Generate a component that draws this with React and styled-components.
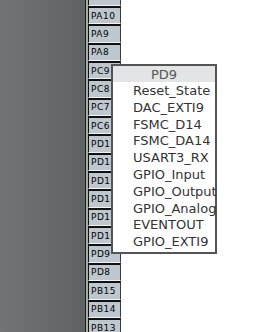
import React from "react";
import styled, { createGlobalStyle } from "styled-components";

const Global = createGlobalStyle`
  html, body {
    margin: 0;
    padding: 0;
    background: #fff;
    overflow: hidden;
  }
`;

const Page = styled.div`
  position: relative;
  display: flex;
  flex-direction: row;
  width: 271px;
  height: 332px;
  overflow: hidden;
  background: #fff;
`;

const Chip = styled.div`
  width: 85px;
  height: 100%;
  background: linear-gradient(to right, #717575, #5f6363);
  border-right: 1px solid #1e1e1e;
`;

const PinRail = styled.div`
  display: flex;
  flex-direction: column;
  padding-left: 2px;
  margin-top: -12.35px;
  background: linear-gradient(to right, #a8acae 0, #a8acae 2px, #fff 2px);
`;

const Pin = styled.div`
  box-sizing: border-box;
  flex-shrink: 0;
  display: flex;
  align-items: center;
  width: 33px;
  height: 18.35px;
  padding-left: 2px;
  background: #bdc7cd;
  border-left: 1px solid #111;
  border-right: 1px solid #3a3a3a;
  border-top: 2px solid #111;
  border-bottom: 1px solid #f2f2f2;
  font-family: "DejaVu Sans", sans-serif;
  font-size: 9px;
  letter-spacing: 0.5px;
  color: #000;
  white-space: nowrap;
  overflow: hidden;
`;

const Menu = styled.div`
  position: absolute;
  left: 111px;
  top: 64px;
  width: 102px;
  border: 2px solid #545454;
  background: #fff;
  font-family: "DejaVu Sans", sans-serif;
  font-size: 13px;
`;

const MenuTitle = styled.div`
  height: 16px;
  line-height: 18px;
  background: #e2e4e6;
  color: #555;
  text-align: center;
`;

const MenuList = styled.div`
  display: flex;
  flex-direction: column;
  padding: 1px 0;
`;

const MenuItem = styled.div`
  height: 16.8px;
  line-height: 16.8px;
  padding-left: 20px;
  color: #333;
  white-space: nowrap;
`;

const pins = [
  "PA11", "PA10", "PA9", "PA8", "PC9", "PC8", "PC7", "PC6",
  "PD15", "PD14", "PD13", "PD12", "PD11", "PD10", "PD9", "PD8",
  "PB15", "PB14", "PB13", "PB12",
];

const options = [
  "Reset_State", "DAC_EXTI9", "FSMC_D14", "FSMC_DA14", "USART3_RX",
  "GPIO_Input", "GPIO_Output", "GPIO_Analog", "EVENTOUT", "GPIO_EXTI9",
];

export default function App() {
  return (
    <>
      <Global />
      <Page>
        <Chip />
        <PinRail>
          {pins.map((p) => (
            <Pin key={p}>{p}</Pin>
          ))}
        </PinRail>
        <Menu>
          <MenuTitle>PD9</MenuTitle>
          <MenuList>
            {options.map((o) => (
              <MenuItem key={o}>{o}</MenuItem>
            ))}
          </MenuList>
        </Menu>
      </Page>
    </>
  );
}
